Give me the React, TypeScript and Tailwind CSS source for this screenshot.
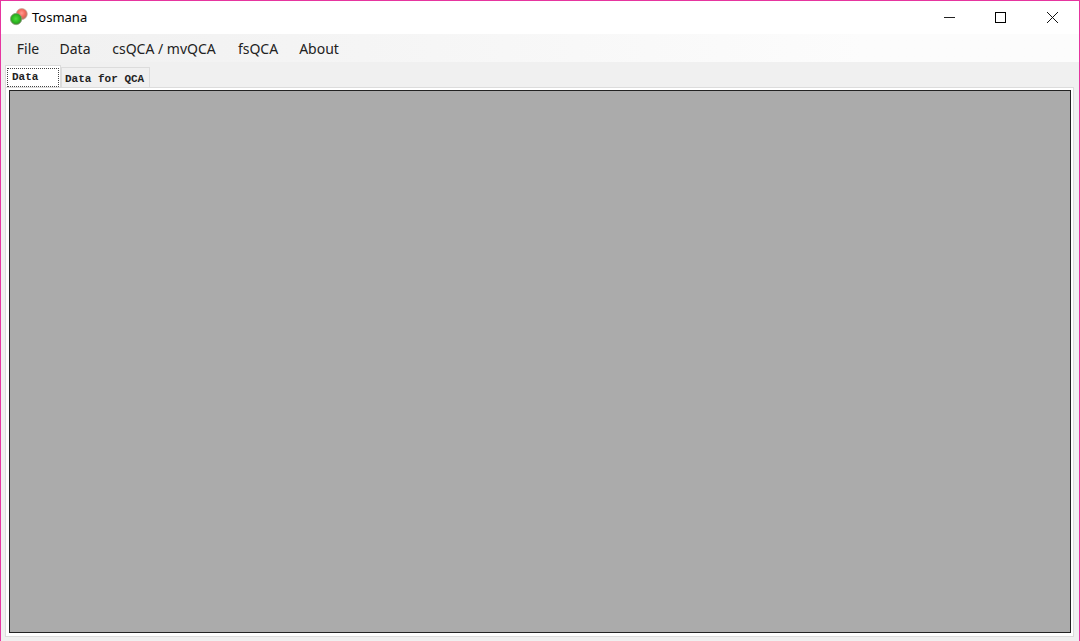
import { useState } from "react";

const menus = [
  { label: "File", width: "w-[46px]" },
  { label: "Data", width: "w-12" },
  { label: "csQCA / mvQCA", width: "w-[130px]" },
  { label: "fsQCA", width: "w-[58px]" },
  { label: "About", width: "w-16" },
];

const tabs = [
  { id: "tab-data", name: "Data", width: "w-14" },
  { id: "tab-qca", name: "Data for QCA", width: "w-[89px]" },
];

function AppIcon() {
  return (
    <svg className="mt-1.5 h-5 w-5" viewBox="0 0 20 20" aria-hidden="true">
      <defs>
        <radialGradient id="red" cx="48%" cy="42%">
          <stop offset="0" stopColor="#ff9c90" />
          <stop offset="0.65" stopColor="#f4685c" />
          <stop offset="1" stopColor="#c0705f" />
        </radialGradient>
        <radialGradient id="green" cx="48%" cy="48%">
          <stop offset="0" stopColor="#4fdc3c" />
          <stop offset="0.7" stopColor="#2ab41f" />
          <stop offset="1" stopColor="#4a8038" />
        </radialGradient>
      </defs>
      <circle cx="12.8" cy="7" r="5.5" fill="url(#red)" stroke="#c9a99c" strokeWidth="0.7" />
      <circle cx="7.1" cy="12" r="5.7" fill="url(#green)" stroke="#8ba27c" strokeWidth="0.7" />
    </svg>
  );
}

function TitleBar() {
  return (
    <header className="flex h-[33px] items-start bg-white pr-px pl-2">
      <AppIcon />
      <h1 className="ml-[3px] pt-1.5 text-[13px] leading-5 text-black">Tosmana</h1>
      <div className="ml-auto flex h-full">
        <button type="button" aria-label="Minimize" className="flex w-[50px] items-start justify-center pt-2.5">
          <svg className="h-3 w-3" viewBox="0 0 12 12" shapeRendering="crispEdges">
            <path d="M1 6.5H12" stroke="#222" />
          </svg>
        </button>
        <button type="button" aria-label="Maximize" className="flex w-[52px] items-start justify-center pt-2.5">
          <svg className="h-3 w-3" viewBox="0 0 12 12" shapeRendering="crispEdges">
            <path d="M1.5 1.5H11.5V11.5H1.5Z" fill="none" stroke="#000" />
          </svg>
        </button>
        <button type="button" aria-label="Close" className="flex w-[52px] items-start justify-center pt-2.5">
          <svg className="h-3 w-3" viewBox="0 0 12 12">
            <path d="M1 1L12 12M12 1L1 12" stroke="#111" />
          </svg>
        </button>
      </div>
    </header>
  );
}

export default function App() {
  const [tab, setTab] = useState("tab-data");
  return (
    <main className="flex min-h-screen flex-col border-x border-t border-[#e6359f] bg-[#f0f0f0] font-['Noto_Sans',sans-serif]">
      <TitleBar />
      <nav className="flex h-7 items-center bg-linear-to-r from-[#f0f0f0] to-[#fcfcfc] to-80% pl-1">
        {menus.map((m) => (
          <button
            key={m.label}
            type="button"
            className={`${m.width} h-full pt-0.5 text-center text-[14px] leading-5 whitespace-nowrap text-[#222]`}
          >
            {m.label}
          </button>
        ))}
      </nav>
      <section className="flex flex-1 flex-col pt-[3px] pr-[5px] pb-1 pl-1">
        <div role="tablist" className="flex h-[22px] items-end">
          {tabs.map((t) => (
            <button
              key={t.id}
              type="button"
              role="tab"
              id={t.id}
              aria-selected={tab === t.id}
              aria-controls="panel"
              onClick={() => setTab(t.id)}
              className={`${t.width} border border-b-0 border-[#dcdcdc] text-left font-['Liberation_Mono',monospace] text-[11px] leading-4 font-bold whitespace-pre text-[#222] ${
                tab === t.id ? "h-[22px] bg-white px-px pt-0.5" : "h-5 bg-[#f0f0f0] px-[3px] pt-0.5"
              }`}
            >
              {tab === t.id ? (
                <span className="block h-[19px] border border-dotted border-[#444] pl-1">{t.name}</span>
              ) : (
                t.name
              )}
            </button>
          ))}
        </div>
        <div
          id="panel"
          role="tabpanel"
          aria-labelledby={tab}
          className="flex flex-1 flex-col border border-[#dcdcdc] bg-white pt-0.5 pr-0.5 pb-[3px] pl-[3px]"
        >
          <div className="flex-1 border border-[#222] bg-[#ababab]" />
        </div>
      </section>
    </main>
  );
}
